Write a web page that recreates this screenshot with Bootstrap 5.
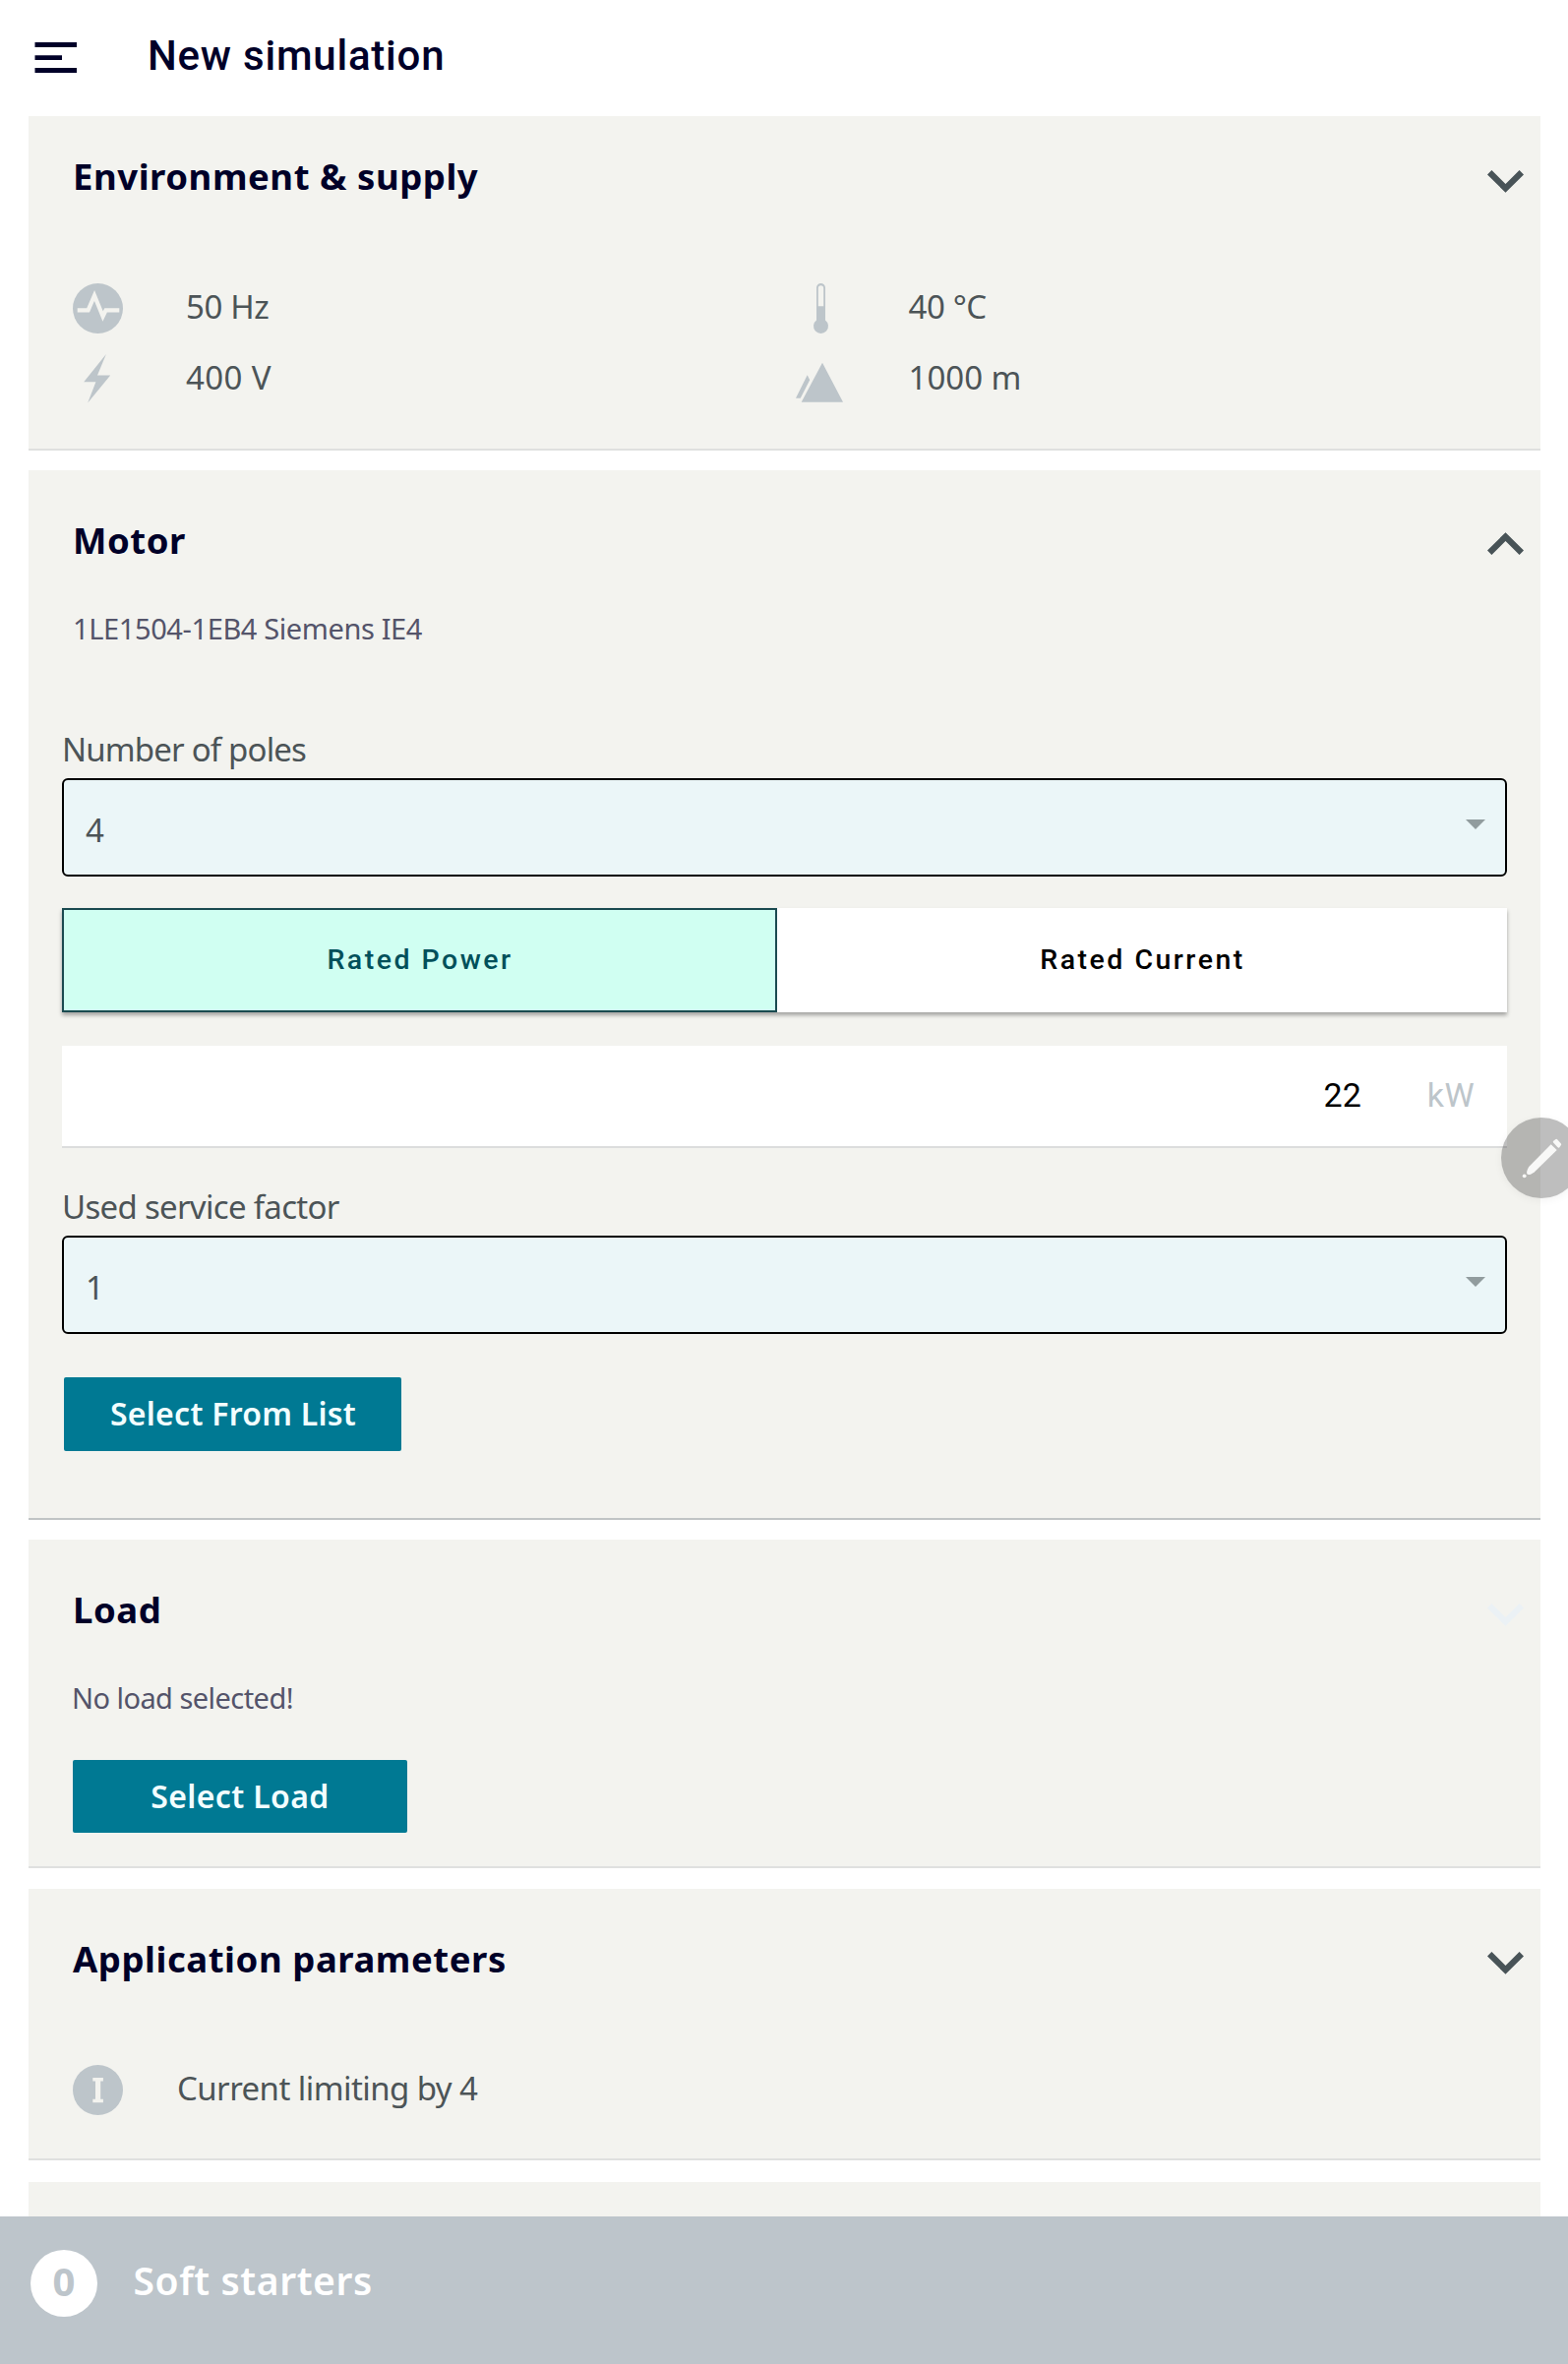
<!DOCTYPE html>
<html lang="en">
<head>
<meta charset="utf-8">
<meta name="viewport" content="width=device-width, initial-scale=1">
<title>New simulation</title>
<link href="https://cdn.jsdelivr.net/npm/bootstrap@5.3.0/dist/css/bootstrap.min.css" rel="stylesheet">
<style>
body{font-family:"Noto Sans",sans-serif;background:#fff;color:#4c5457;width:1594px;min-height:2403px}
.app-shell{height:2403px}
.app-top{height:118px;padding-left:35px}
.app-top svg{margin-top:43px}
.app-title{font:500 42px/50px Roboto,sans-serif;letter-spacing:.78px;color:#000028;margin:32px 0 0 71px}
.panel{margin:0 28px 20px 29px;background:#f3f3ef;border-bottom:2px solid #dfe0df;flex:none}
.panel-open{border-bottom-color:#c0c4c5}
.panel-load{margin-bottom:21px}
.panel-app{margin-bottom:22px}
.panel-peek{height:35px;border:0;margin-bottom:0}
.panel-head{padding:48px 17px 0 45px}
.panel-env .panel-head{padding-top:38px}
.panel-head h2{font-size:36.5px;line-height:46px;padding-bottom:2px;font-weight:700;letter-spacing:.55px;color:#000028}
.chev{fill:none;stroke:#485357;stroke-width:6.3;margin-top:16px}
.chev-env{margin-top:17px}
.chev-motor{margin-top:15px}
.chev-off{stroke:#ebf1f5;margin-top:17px}
.facts{padding:72px 23px 36px 45px}
.facts-app{padding:71px 23px 35px 45px}
.fact{height:72px}
.fact svg{fill:#bdc5ca;flex:none}
.fact span{font-size:33px;line-height:44px;margin-left:64px}
.fact span.fact-tight{letter-spacing:-.4px}
.fact span.fact-loose{letter-spacing:.4px}
.fact span.fact-wide{margin-left:55px;letter-spacing:-.57px}
.sub-line{font-size:29px;line-height:40px;color:#54546a;letter-spacing:-.39px;margin:45px 0 0 45px}
.panel-load .sub-line{letter-spacing:-.55px;margin-left:44px}
.fields{padding:81px 34px 68px 34px}
.field-name{font-size:33px;line-height:44px;letter-spacing:-.83px;margin:0 0 7px}
.amount + .field-name{letter-spacing:-.7px}
.pick{height:100px;background:#ebf6f8;border:2px solid #000;border-radius:6px;padding:6px 20px 0 22px;font-size:33px;line-height:44px;color:#4c5457;width:100%}
.pick svg{fill:#919c9e;margin-top:-12px}
.switch{height:106px;margin-top:32px;box-shadow:0 3px 4px rgba(0,0,0,.33);background:#fff}
.switch button{font:500 28.5px/40px Roboto,sans-serif;letter-spacing:2.48px;border:0;background:#fff;color:#000;padding:0 0 0 1px;flex:1}
.switch button.on{flex:0 0 727px;background:#d0fff2;border:2px solid #1a4a50;color:#00505a}
.amount{height:104px;margin:34px 0 38px;background:#fff;border-bottom:2px solid #dcdddd;padding:0 33px 2px 0;font:400 34px/44px Roboto,sans-serif;color:#000;gap:67px}
.amount .unit{color:#bdc5ca;letter-spacing:.4px}
.btn-teal{background:#007993;color:#f2feff;border:0;border-radius:2px;font-size:32px;font-weight:600;line-height:44px;padding:0 0 2px;letter-spacing:.25px}
.btn-teal:hover{background:#007993;color:#fff}
.btn-list{width:343px;height:75px;margin:44px 0 0 2px;padding-left:1px}
.btn-load{width:340px;height:74px;margin:43px 0 34px 45px;padding-bottom:0;letter-spacing:.36px}
.fab{position:absolute;left:1526px;top:1136px;width:82px;height:82px;border-radius:50%;background:rgba(0,0,0,.255);box-shadow:0 2px 8px rgba(0,0,0,.05)}
.foot{height:150px;background:#bdc5cb;padding:34px 0 0 31px;flex:none}
.count{width:68px;height:68px;border-radius:50%;background:#fff;color:#bdc5cb;font-size:40px;font-weight:700;line-height:50px;padding-bottom:4px}
.foot-label{font-size:39px;font-weight:600;line-height:61px;letter-spacing:.6px;color:#fff;margin-left:36.5px}
</style>
<script src="https://cdn.jsdelivr.net/npm/bootstrap@5.3.0/dist/js/bootstrap.bundle.min.js"></script>
</head>
<body>
<div class="app-shell d-flex flex-column position-relative overflow-hidden">
  <header class="app-top d-flex align-items-start flex-shrink-0">
    <svg width="44" height="31" viewBox="0 0 44 31" fill="#000028"><path d="M.5 0H43v5H.5zM.5 13.2H28v4.8H.5zM.5 26H43v5H.5z"/></svg>
    <h1 class="app-title">New simulation</h1>
  </header>

  <section class="panel panel-env">
    <div class="panel-head d-flex justify-content-between align-items-start">
      <h2 class="mb-0">Environment &amp; supply</h2>
      <svg class="chev chev-env" width="37" height="23" viewBox="0 0 37 23"><path d="M2.2 2.2 18.5 18.4 34.8 2.2"/></svg>
    </div>
    <div class="facts row g-0">
      <div class="col-6">
        <div class="fact d-flex align-items-center">
          <svg width="51" height="72" viewBox="74 276 51 72"><circle cx="99.5" cy="313.5" r="25.5"/><path d="M78.7 315.3H89.6L96 300.5 104.6 321.5 107.6 315.3H121.3" fill="none" stroke="#f3f3ef" stroke-width="4.2"/></svg>
          <span class="fact-tight">50 Hz</span>
        </div>
        <div class="fact d-flex align-items-center">
          <svg width="51" height="72" viewBox="74 348 51 72"><path d="M107.9 360 99 381.6H112.2L89.2 409.6 97.4 388.2H85.2z"/></svg>
          <span class="fact-loose">400 V</span>
        </div>
      </div>
      <div class="col-6">
        <div class="fact d-flex align-items-center">
          <svg width="51" height="72" viewBox="809 276 51 72"><path fill-rule="evenodd" d="M830 292.5a4.5 4.5 0 0 1 9 0V325.4a7.5 7.5 0 1 1-9 0zM831.8 293V311.3H837.2V293a2.7 2.7 0 0 0-5.4 0z"/></svg>
          <span class="fact-tight">40 °C</span>
        </div>
        <div class="fact d-flex align-items-center">
          <svg width="51" height="72" viewBox="809 348 51 72"><path d="M836 368.8 857 408.8H814.7zM820.7 381.3 823.2 386.3 813.7 404.8H809z"/></svg>
          <span>1000 m</span>
        </div>
      </div>
    </div>
  </section>

  <section class="panel panel-open">
    <div class="panel-head d-flex justify-content-between align-items-start">
      <h2 class="mb-0">Motor</h2>
      <svg class="chev chev-motor" width="37" height="23" viewBox="0 0 37 23"><path d="M2.2 20.8 18.5 4.6 34.8 20.8"/></svg>
    </div>
    <p class="sub-line">1LE1504-1EB4 Siemens IE4</p>
    <div class="fields d-flex flex-column align-items-stretch">
      <div class="field-name">Number of poles</div>
      <button type="button" class="pick d-flex align-items-center justify-content-between"><span>4</span><svg width="20" height="10" viewBox="0 0 20 10"><path d="M0 0H20L10 10z"/></svg></button>
      <div class="switch d-flex">
        <button type="button" class="on">Rated Power</button>
        <button type="button">Rated Current</button>
      </div>
      <div class="amount d-flex align-items-center justify-content-end"><span>22</span><span class="unit">kW</span></div>
      <div class="field-name">Used service factor</div>
      <button type="button" class="pick d-flex align-items-center justify-content-between"><span>1</span><svg width="20" height="10" viewBox="0 0 20 10"><path d="M0 0H20L10 10z"/></svg></button>
      <button type="button" class="btn btn-teal btn-list">Select From List</button>
    </div>
  </section>

  <section class="panel panel-load">
    <div class="panel-head d-flex justify-content-between align-items-start">
      <h2 class="mb-0">Load</h2>
      <svg class="chev chev-off" width="37" height="23" viewBox="0 0 37 23"><path d="M2.2 2.2 18.5 18.4 34.8 2.2"/></svg>
    </div>
    <p class="sub-line">No load selected!</p>
    <button type="button" class="btn btn-teal btn-load d-block">Select Load</button>
  </section>

  <section class="panel panel-app">
    <div class="panel-head d-flex justify-content-between align-items-start">
      <h2 class="mb-0">Application parameters</h2>
      <svg class="chev" width="37" height="23" viewBox="0 0 37 23"><path d="M2.2 2.2 18.5 18.4 34.8 2.2"/></svg>
    </div>
    <div class="facts-app">
      <div class="fact d-flex align-items-center">
        <svg width="51" height="72" viewBox="74 2087 51 72"><circle cx="99.5" cy="2124.5" r="25.5"/><path fill="#f3f3ef" d="M94.3 2112H104.9V2115.4H102.2V2133.8H104.9V2137.2H94.3V2133.8H97V2115.4H94.3z"/></svg>
        <span class="fact-wide">Current limiting by 4</span>
      </div>
    </div>
  </section>

  <section class="panel panel-peek"></section>

  <footer class="foot d-flex align-items-start">
    <div class="count d-flex align-items-center justify-content-center">0</div>
    <div class="foot-label">Soft starters</div>
  </footer>

  <div class="fab">
    <svg class="d-block" width="82" height="82" viewBox="0 0 82 82" fill="#f8f8f7"><path d="M50.7 27.3 56.7 32.9 34 55.2Q28.5 59.2 26.6 57.6 25 55.8 28.2 50z"/><path d="M54 24.6 56.2 23 60 27.3 58.4 29.4z" stroke="#f8f8f7" stroke-width="2.4" stroke-linejoin="round"/><circle cx="23.7" cy="59.3" r="1.9"/></svg>
  </div>
</div>
</body>
</html>
